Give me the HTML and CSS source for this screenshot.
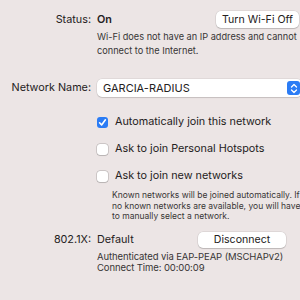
FILE: index.html
```html
<!DOCTYPE html>
<html lang="en">
<head>
    <meta charset="UTF-8">
    <title>Wi-Fi Advanced</title>
    <link rel="stylesheet" href="styles.css">
</head>
<body>
    <div class="panel">
        <div class="row status-row">
            <div class="label">Status:</div>
            <div class="value wide">
                <strong>On</strong>
                <button class="btn wifi-btn">Turn Wi-Fi Off</button>
            </div>
        </div>
        <p class="note">Wi-Fi does not have an IP address and cannot<br>connect to the Internet.</p>

        <div class="row name-row">
            <div class="label">Network Name:</div>
            <div class="value">
                <div class="select">
                    <span>GARCIA-RADIUS</span>
                    <span class="stepper">
                        <svg width="8" height="11" viewBox="0 0 8 11">
                            <path d="M1.5 4 L4 1.5 L6.5 4 M1.5 7 L4 9.5 L6.5 7" fill="none" stroke="#fff" stroke-width="1.3" stroke-linecap="round" stroke-linejoin="round"/>
                        </svg>
                    </span>
                </div>
            </div>
        </div>

        <div class="checks">
            <label class="check">
                <span class="box on">
                    <svg width="9" height="9" viewBox="0 0 9 9">
                        <path d="M1.6 4.8 L3.6 7 L7.4 1.8" fill="none" stroke="#fff" stroke-width="1.6" stroke-linecap="round" stroke-linejoin="round"/>
                    </svg>
                </span>
                Automatically join this network
            </label>
            <label class="check">
                <span class="box"></span>
                Ask to join Personal Hotspots
            </label>
            <label class="check">
                <span class="box"></span>
                Ask to join new networks
            </label>
        </div>
        <p class="small">Known networks will be joined automatically. If<br>no known networks are available, you will have<br>to manually select a network.</p>

        <div class="row dot1x-row">
            <div class="label">802.1X:</div>
            <div class="value narrow">
                <span>Default</span>
                <button class="btn disc-btn">Disconnect</button>
            </div>
        </div>
        <p class="auth">Authenticated via EAP-PEAP (MSCHAPv2)<br>Connect Time: 00:00:09</p>
    </div>
</body>
</html>
```

FILE: styles.css
```css
* {
    box-sizing: border-box;
    margin: 0;
    padding: 0;
}

body {
    font-family: 'Inter', 'Liberation Sans', sans-serif;
    background-color: #ece5e5;
    color: #242121;
    overflow: hidden;
    width: 300px;
    height: 300px;
}

.panel {
    width: 360px;
    padding-top: 11px;
}

.row {
    display: grid;
    grid-template-columns: 91px 1fr;
    column-gap: 6px;
    align-items: center;
    font-size: 10.8px;
    line-height: 16px;
}

.label {
    display: flex;
    justify-content: flex-end;
    white-space: nowrap;
}

.value {
    display: flex;
    align-items: center;
    white-space: nowrap;
}

.value.wide {
    width: 202px;
}

.value.narrow {
    width: 189px;
}

.value strong {
    font-weight: 600;
}

.btn {
    font-family: inherit;
    font-size: 10.6px;
    line-height: 16px;
    color: #242121;
    background: #fff;
    border: none;
    border-radius: 5px;
    box-shadow: 0 0 0 0.5px rgba(0,0,0,0.12), 0 1px 1px rgba(0,0,0,0.15);
    white-space: nowrap;
    margin-left: auto;
}

.wifi-btn {
    width: 83px;
    height: 17px;
}

.note {
    margin: 2px 0 0 97px;
    font-size: 9.2px;
    line-height: 14px;
    color: #383535;
    white-space: nowrap;
}

.name-row {
    margin-top: 21px;
}

.select {
    width: 205px;
    height: 18px;
    background: #fff;
    border-radius: 5px;
    box-shadow: 0 0 0 0.5px rgba(0,0,0,0.1), 0 1px 1px rgba(0,0,0,0.12);
    display: flex;
    align-items: center;
    justify-content: space-between;
    padding: 0 2px 0 6px;
    font-size: 11px;
}

.stepper {
    width: 13px;
    height: 14px;
    background: #2b7cf5;
    border-radius: 3px;
    display: flex;
    align-items: center;
    justify-content: center;
}

.checks {
    margin: 19px 0 0 97px;
    display: flex;
    flex-direction: column;
    gap: 15px;
}

.check {
    display: flex;
    align-items: center;
    gap: 7px;
    font-size: 10.8px;
    line-height: 12px;
    height: 12px;
    white-space: nowrap;
}

.box {
    width: 11px;
    height: 11px;
    border-radius: 3px;
    background: #fff;
    box-shadow: 0 0 0 0.5px rgba(0,0,0,0.25), 0 0.5px 1px rgba(0,0,0,0.1);
    display: flex;
    align-items: center;
    justify-content: center;
}

.box.on {
    background: #2b7cf5;
    box-shadow: none;
}

.small {
    margin: 8px 0 0 112px;
    font-size: 8.5px;
    line-height: 10.5px;
    color: #383535;
    white-space: nowrap;
}

.dot1x-row {
    margin-top: 10px;
}

.disc-btn {
    width: 88px;
    height: 16px;
}

.auth {
    margin: 3px 0 0 97px;
    font-size: 9.5px;
    letter-spacing: -0.1px;
    line-height: 11px;
    color: #383535;
    white-space: nowrap;
}
```
